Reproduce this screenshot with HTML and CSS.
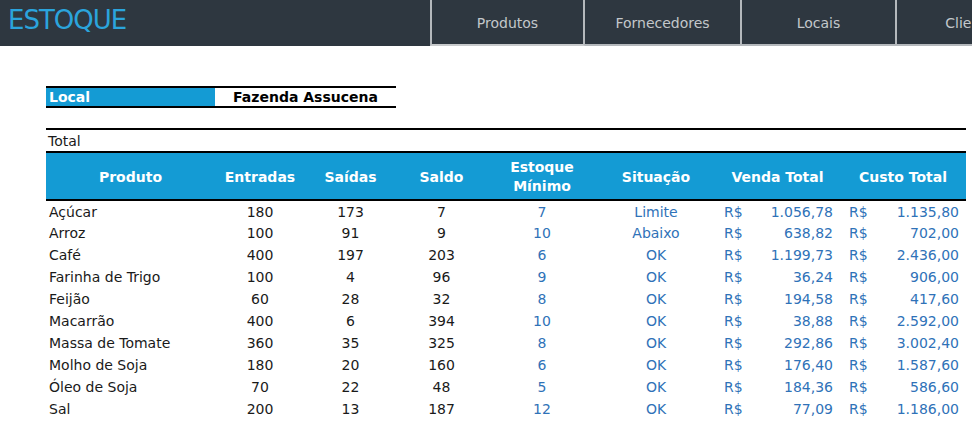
FILE: index.html
```html
<!DOCTYPE html>
<html lang="pt-BR">
<head>
    <meta charset="UTF-8">
    <title>Estoque</title>
    <link rel="stylesheet" href="styles.css">
</head>
<body>
<header class="topbar">
    <div class="brand">ESTOQUE</div>
    <nav class="tabs">
        <a class="tab tab-active">Produtos</a>
        <a class="tab">Fornecedores</a>
        <a class="tab">Locais</a>
        <a class="tab">Clientes</a>
    </nav>
</header>

<main class="sheet">
    <!-- Filtro de local -->
    <div class="local-box">
        <div class="local-label">Local</div>
        <div class="local-value">Fazenda Assucena</div>
    </div>

    <div class="total-row">Total</div>

    <table class="stock">
        <colgroup>
            <col class="c-prod"><col class="c-num"><col class="c-num2"><col class="c-num2">
            <col class="c-min"><col class="c-sit"><col class="c-venda"><col class="c-custo">
        </colgroup>
        <thead>
            <tr>
                <th>Produto</th>
                <th>Entradas</th>
                <th>Saídas</th>
                <th>Saldo</th>
                <th>Estoque<br>Mínimo</th>
                <th>Situação</th>
                <th>Venda Total</th>
                <th>Custo Total</th>
            </tr>
        </thead>
        <tbody>
            <tr><td class="name">Açúcar</td><td>180</td><td>173</td><td>7</td><td class="blue">7</td><td class="blue">Limite</td><td class="money"><span>R$</span><span>1.056,78</span></td><td class="money"><span>R$</span><span>1.135,80</span></td></tr>
            <tr><td class="name">Arroz</td><td>100</td><td>91</td><td>9</td><td class="blue">10</td><td class="blue">Abaixo</td><td class="money"><span>R$</span><span>638,82</span></td><td class="money"><span>R$</span><span>702,00</span></td></tr>
            <tr><td class="name">Café</td><td>400</td><td>197</td><td>203</td><td class="blue">6</td><td class="blue">OK</td><td class="money"><span>R$</span><span>1.199,73</span></td><td class="money"><span>R$</span><span>2.436,00</span></td></tr>
            <tr><td class="name">Farinha de Trigo</td><td>100</td><td>4</td><td>96</td><td class="blue">9</td><td class="blue">OK</td><td class="money"><span>R$</span><span>36,24</span></td><td class="money"><span>R$</span><span>906,00</span></td></tr>
            <tr><td class="name">Feijão</td><td>60</td><td>28</td><td>32</td><td class="blue">8</td><td class="blue">OK</td><td class="money"><span>R$</span><span>194,58</span></td><td class="money"><span>R$</span><span>417,60</span></td></tr>
            <tr><td class="name">Macarrão</td><td>400</td><td>6</td><td>394</td><td class="blue">10</td><td class="blue">OK</td><td class="money"><span>R$</span><span>38,88</span></td><td class="money"><span>R$</span><span>2.592,00</span></td></tr>
            <tr><td class="name">Massa de Tomate</td><td>360</td><td>35</td><td>325</td><td class="blue">8</td><td class="blue">OK</td><td class="money"><span>R$</span><span>292,86</span></td><td class="money"><span>R$</span><span>3.002,40</span></td></tr>
            <tr><td class="name">Molho de Soja</td><td>180</td><td>20</td><td>160</td><td class="blue">6</td><td class="blue">OK</td><td class="money"><span>R$</span><span>176,40</span></td><td class="money"><span>R$</span><span>1.587,60</span></td></tr>
            <tr><td class="name">Óleo de Soja</td><td>70</td><td>22</td><td>48</td><td class="blue">5</td><td class="blue">OK</td><td class="money"><span>R$</span><span>184,36</span></td><td class="money"><span>R$</span><span>586,60</span></td></tr>
            <tr><td class="name">Sal</td><td>200</td><td>13</td><td>187</td><td class="blue">12</td><td class="blue">OK</td><td class="money"><span>R$</span><span>77,09</span></td><td class="money"><span>R$</span><span>1.186,00</span></td></tr>
        </tbody>
    </table>
</main>
</body>
</html>
```

FILE: styles.css
```css
/* Planilha de estoque */
:root {
    --bar: #2e3740;
    --tab-line: #b4b8bc;
    --head-blue: #149bd4;
    --brand-blue: #2ba4dc;
    --text-blue: #2f72b8;
    --ink: #1a1a1a;
}

* {
    margin: 0;
    padding: 0;
    box-sizing: border-box;
}

body {
    background: #fff;
    color: var(--ink);
    font-family: "DejaVu Sans", sans-serif;
    font-size: 14px;
    overflow: hidden;
}

/* Barra superior */
.topbar {
    display: flex;
    height: 46px;
    background: var(--bar);
    overflow: hidden;
}

.brand {
    flex: 0 0 430px;
    padding: 5px 0 0 8px;
    color: var(--brand-blue);
    font-size: 26px;
    letter-spacing: -1px;
}

.tabs {
    display: flex;
    flex: 1;
    overflow: hidden;
}

.tab {
    flex: 0 0 155px;
    display: flex;
    align-items: center;
    justify-content: center;
    padding-top: 1px;
    color: #c3c7cb;
    font-size: 14px;
    border-left: 2px solid var(--tab-line);
    border-bottom: 2px solid var(--tab-line);
}

.tab-active {
    border-right: 2px solid var(--tab-line);
    border-bottom-color: #c8cacc;
}

.tab-active + .tab {
    border-left: none;
}

/* Área da planilha */
.sheet {
    padding: 40px 6px 0 46px;
}

.local-box {
    display: flex;
    width: 350px;
    height: 22px;
    border-top: 2px solid #000;
    border-bottom: 2px solid #000;
}

.local-label {
    width: 169px;
    padding-left: 3px;
    background: var(--head-blue);
    color: #fff;
    font-weight: bold;
    line-height: 18px;
}

.local-value {
    flex: 1;
    text-align: center;
    font-weight: bold;
    line-height: 18px;
    color: #000;
}

.total-row {
    margin-top: 20px;
    height: 23px;
    padding-left: 2px;
    border-top: 2px solid #000;
    line-height: 22px;
}

.stock {
    width: 920px;
    border-collapse: collapse;
    table-layout: fixed;
}

.c-prod { width: 169px; }
.c-num { width: 90px; }
.c-num2 { width: 91px; }
.c-min { width: 110px; }
.c-sit { width: 118px; }
.c-venda { width: 125px; }
.c-custo { width: 126px; }

.stock thead tr {
    background: var(--head-blue);
    border-top: 2px solid #000;
    border-bottom: 2px solid #000;
}

.stock th {
    height: 48px;
    padding-top: 2px;
    color: #fff;
    font-weight: bold;
    line-height: 19px;
    text-align: center;
}

.stock td {
    height: 22px;
    padding: 0;
    text-align: center;
    white-space: nowrap;
}

.stock td.name {
    text-align: left;
    padding-left: 3px;
}

.stock td.blue,
.stock td.money {
    color: var(--text-blue);
}

.stock td.money span:first-child {
    float: left;
    padding-left: 9px;
}

.stock td.money span:last-child {
    float: right;
    padding-right: 7px;
}
```
